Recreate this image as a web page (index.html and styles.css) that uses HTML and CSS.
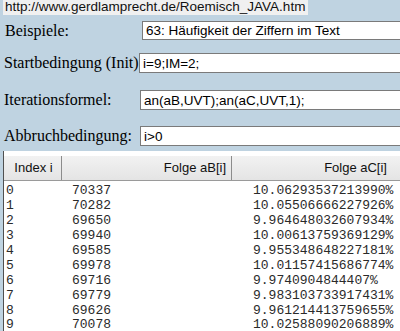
FILE: index.html
```html
<!DOCTYPE html>
<html>
<head>
<meta charset="utf-8">
<link rel="stylesheet" href="styles.css">
</head>
<body>
<div class="url">http://www.gerdlamprecht.de/Roemisch_JAVA.htm</div>
<div class="row r1"><label class="lbl">Beispiele:</label><input class="inp i1" type="text" value="63: Häufigkeit der Ziffern im Text"></div>
<div class="row r2"><label class="lbl">Startbedingung (Init)</label><input class="inp" type="text" value="i=9;IM=2;"></div>
<div class="row r3"><label class="lbl">Iterationsformel:</label><input class="inp" type="text" value="an(aB,UVT);an(aC,UVT,1);"></div>
<div class="row r4"><label class="lbl">Abbruchbedingung:</label><input class="inp" type="text" value="i&gt;0"></div>
<div class="table">
  <div class="head">
    <div class="hc c1">Index i</div>
    <div class="hc c2">Folge aB[i]</div>
    <div class="hc c3">Folge aC[i]</div>
  </div>
  <div class="body">
    <div class="tr"><span>0</span><span>70337</span><span>10.06293537213990%</span></div>
    <div class="tr"><span>1</span><span>70282</span><span>10.05506666227926%</span></div>
    <div class="tr"><span>2</span><span>69650</span><span>9.964648032607934%</span></div>
    <div class="tr"><span>3</span><span>69940</span><span>10.00613759369129%</span></div>
    <div class="tr"><span>4</span><span>69585</span><span>9.955348648227181%</span></div>
    <div class="tr"><span>5</span><span>69978</span><span>10.01157415686774%</span></div>
    <div class="tr"><span>6</span><span>69716</span><span>9.9740904844407%</span></div>
    <div class="tr"><span>7</span><span>69779</span><span>9.983103733917431%</span></div>
    <div class="tr"><span>8</span><span>69626</span><span>9.961214413759655%</span></div>
    <div class="tr"><span>9</span><span>70078</span><span>10.02588090206889%</span></div>
  </div>
</div>
</body>
</html>
```
FILE: styles.css
```css
html, body {
  margin: 0;
  padding: 0;
  overflow: hidden;
}
body {
  background: #bfd3e1;
  width: 400px;
  height: 331px;
}
.url {
  display: inline-block;
  margin-left: 3px;
  padding: 0 3px 0 2px;
  height: 15px;
  background: #f0f0f0;
  color: #111;
  font: 13.5px/14px "Liberation Sans", Arial, sans-serif;
  vertical-align: top;
}
.row {
  display: flex;
  align-items: center;
  overflow: hidden;
  height: 20px;
}
.r1 { margin-top: 3px; height: 19px; }
.r2 { margin-top: 13px; }
.r3 { margin-top: 17px; }
.r4 { margin-top: 16px; }
.lbl {
  flex: none;
  width: 136px;
  padding-left: 4px;
  font: 16px "Liberation Serif", "Times New Roman", serif;
  color: #000;
  white-space: nowrap;
}
.r1 .lbl { padding-left: 5px; width: 137px; }
.r2 .lbl { width: 135px; }
.inp {
  flex: none;
  box-sizing: border-box;
  width: 300px;
  height: 100%;
  margin: 0;
  padding: 0 3px;
  border: 1px solid #7a7a7a;
  background: #fff;
  color: #000;
  font: 13.5px "Liberation Sans", Arial, sans-serif;
  outline: none;
}
.table {
  margin: 5px 0 0 3px;
  padding-top: 5px;
  border-left: 1px solid #505050;
  background: #fff;
  height: 178px;
}
.head {
  display: grid;
  grid-template-columns: 58px 170px 1fr;
  height: 24px;
  background: linear-gradient(#f2f2f2, #e4e4e4);
  border-bottom: 1px solid #9a9a9a;
  font: 13px/24px "Liberation Sans", Arial, sans-serif;
  color: #111;
}
.hc { white-space: nowrap; }
.c1 { text-align: center; border-right: 1px solid #8c8c8c; padding-left: 2px; }
.c2 { text-align: right; padding-right: 5px; border-right: 1px solid #8c8c8c; }
.c3 { text-align: right; padding-right: 13px; }
.body {
  padding: 2px 0 0 2px;
}
.tr {
  display: grid;
  grid-template-columns: 66px 181px 1fr;
  height: 15px;
  font: 13px/15px "Liberation Mono", "Courier New", monospace;
  color: #2a2a2a;
  white-space: nowrap;
}
.tr:last-child {
  height: 14px;
  line-height: 14px;
}
```
